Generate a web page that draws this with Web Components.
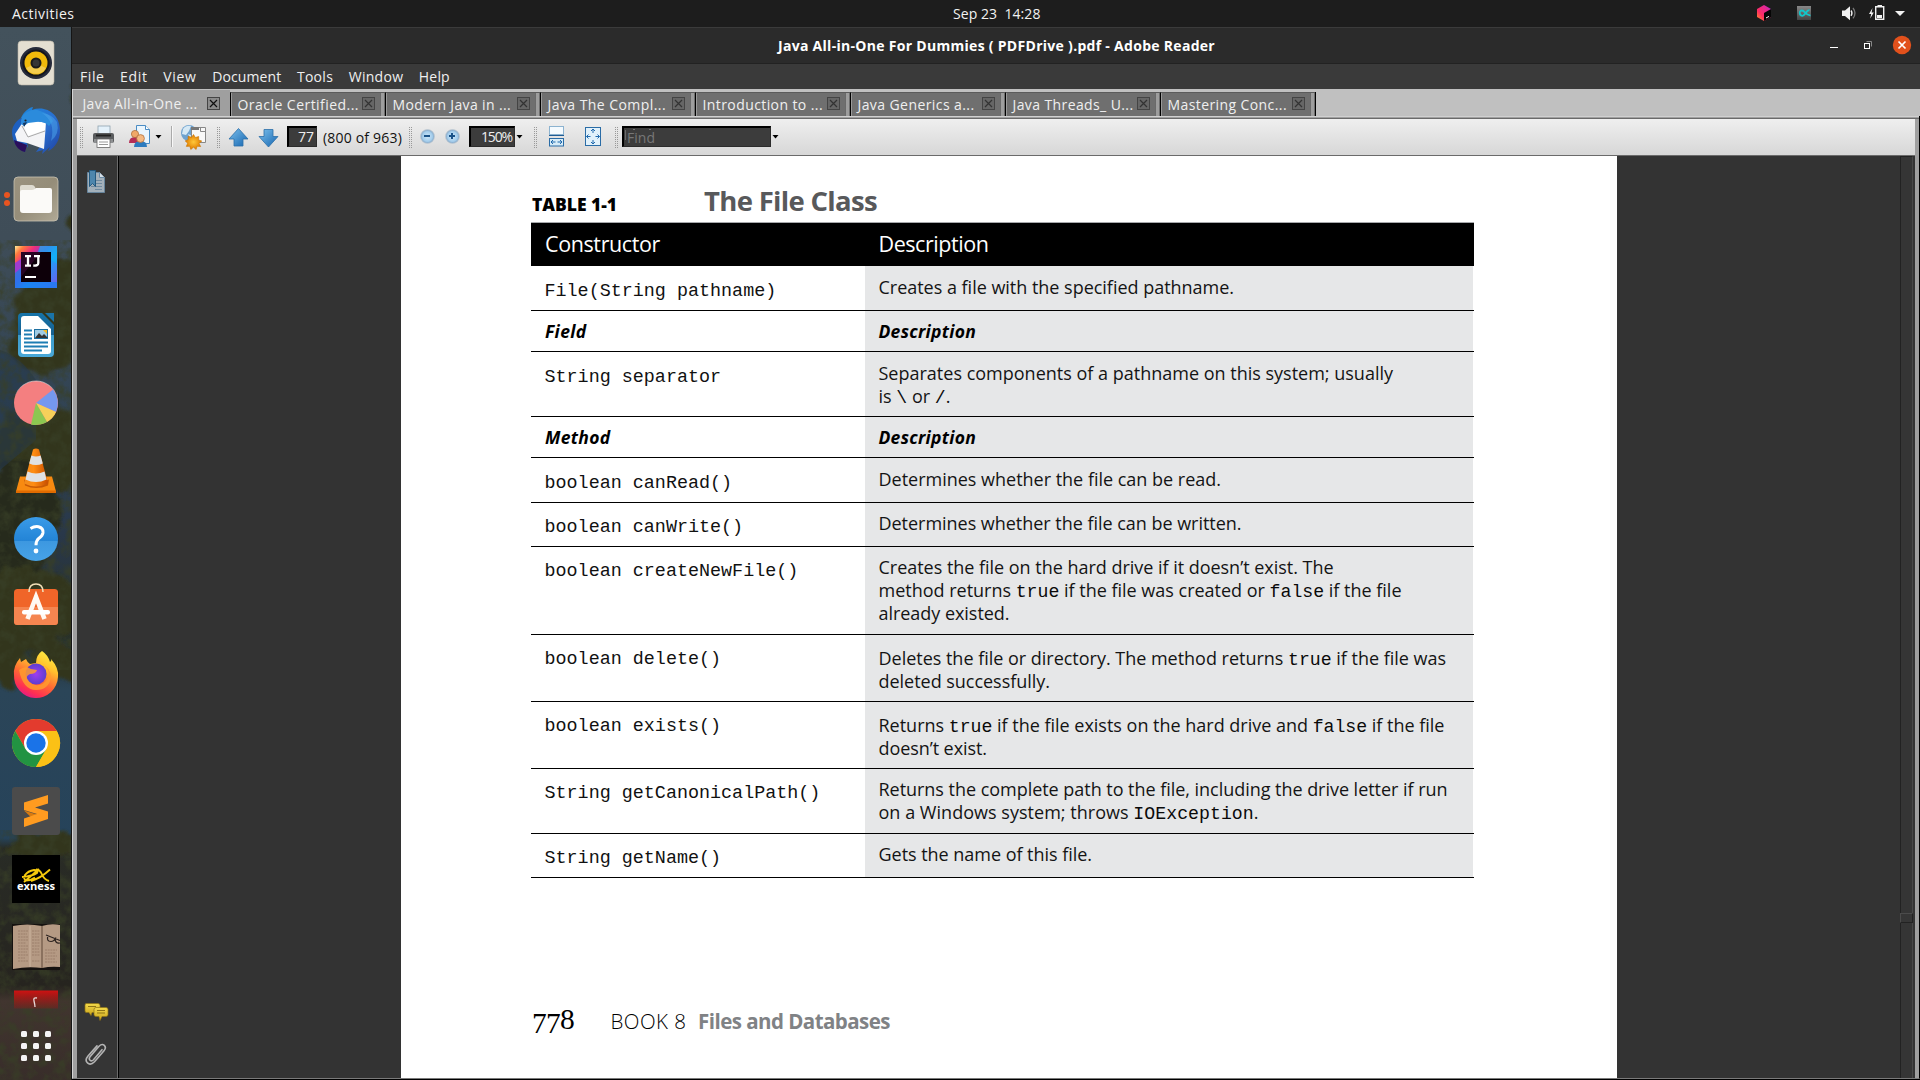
<!DOCTYPE html>
<html lang="en">
<head>
<meta charset="utf-8">
<title>Java All-in-One For Dummies ( PDFDrive ).pdf - Adobe Reader</title>
<style>
html,body{margin:0;padding:0;background:#000}
body{width:1920px;height:1080px;overflow:hidden;font-family:"Open Sans","Noto Sans",sans-serif}
</style>
</head>
<body>
<desk-top></desk-top>
<script>
const make=(name,html,setup)=>{
  const t=document.createElement('template');
  t.innerHTML=html;
  customElements.define(name,class extends HTMLElement{
    constructor(){super();this.attachShadow({mode:'open'});}
    connectedCallback(){
      if(this.ready)return;this.ready=true;
      const c=document.importNode(t.content,true);
      if(setup)setup(this,c);
      this.shadowRoot.appendChild(c);
    }
  });
};

/* One line of text, tracked so that it fills the width given by w. */
customElements.define('fit-text',class extends HTMLElement{
  constructor(){super();this.attachShadow({mode:'open'});
    this.shadowRoot.innerHTML='<style>:host{display:inline-block;white-space:pre;vertical-align:baseline}</style><slot></slot>';}
  connectedCallback(){
    const w=parseFloat(this.getAttribute('w')),n=this.textContent.length;
    this.style.letterSpacing='0px';
    const now=this.getBoundingClientRect().width;
    if(w&&n&&now)this.style.letterSpacing=((w-now)/n).toFixed(3)+'px';
    if(w)this.style.width=w+'px';
  }
});

make('top-bar',`<style>
:host{display:flex;height:27px;background:#1d1d1d;color:#f2f2f2;font-size:14px;line-height:27px;align-items:center}
.l{padding-left:12px;width:953px;box-sizing:border-box}
.d{flex:1}
svg{display:block}
.t{display:flex;align-items:center;height:27px}
</style>
<div class="l"><fit-text w="62.500">Activities</fit-text></div>
<div class="d"><fit-text w="87.500">Sep 23&nbsp; 14:28</fit-text></div>
<div class="t"><svg width="170" height="27" viewBox="1750 0 170 27">
<defs><linearGradient id="c" x1="0" y1="1" x2="1" y2="0"><stop offset="0" stop-color="#ff9a1f"/><stop offset=".35" stop-color="#ff2e63"/><stop offset=".75" stop-color="#e0269a"/><stop offset="1" stop-color="#8a3cf0"/></linearGradient>
<linearGradient id="g" x2="0" y2="1"><stop stop-color="#888"/><stop offset="1" stop-color="#444"/></linearGradient></defs>
<path d="M1757 9l7-4 7 4v8l-7 4-7-4z" fill="url(#c)"/><path d="M1764 13l7-4v8l-7 4z" fill="#050505"/><path d="M1766 18l3-1.600" stroke="#fff" stroke-width="1"/>
<rect x="1797" y="6" width="14" height="14" fill="url(#g)"/>
<path d="M1809.500 10.200c-3-.6-4.500 5.600-7 5.600-3.500 0-3.700-5.300-.5-5.300 3 0 3.500 5.300 8.500 4.800" fill="none" stroke="#12c7cb" stroke-width="1.800"/>
<path d="M1842 10.500h3l5-4.300v14l-5-4.300h-3z" fill="#f2f2f2"/><path d="M1851 10.500q2 2.700 0 5.400" fill="none" stroke="#eee" stroke-width="1.300"/><path d="M1853 8q4 5.200 0 10.400" fill="none" stroke="#777" stroke-width="1.300"/>
<path d="M1872.500 8l-3.500 6h2.200l-1 4.500 3.600-6h-2.200z" fill="#f2f2f2"/>
<path d="M1875.700 6.700h8v12.600h-8z" fill="none" stroke="#f2f2f2" stroke-width="1.400"/><rect x="1877.500" y="5" width="4.500" height="1.500" fill="#f2f2f2"/><rect x="1877" y="15" width="5" height="3" fill="#f2f2f2"/>
<path d="M1895 11h10l-5 5z" fill="#f2f2f2"/>
</svg></div>`);

make('dock-icon',`<style>:host{display:flex;height:68px;width:72px;align-items:center;justify-content:center;flex:none}svg{display:block;overflow:visible}</style>
<svg width="48" height="48" viewBox="0 0 48 48"></svg>`,(h,c)=>{c.querySelector('svg').innerHTML=ICONS[h.getAttribute('name')];});

const ICONS={
speaker:`<rect x="6" y="2" width="36" height="44" rx="3.500" fill="#e4dfd2" stroke="#b9b3a5" stroke-width=".6"/><circle cx="24" cy="24" r="16" fill="#262a3a"/><circle cx="24" cy="24" r="13.600" fill="#15161d"/><circle cx="24" cy="24" r="11.500" fill="#f0b90b"/><path d="M14 29a11.500 11.500 0 0 0 20 0q-10-6-20 0z" fill="#fff" opacity=".28"/><circle cx="24" cy="24" r="5.500" fill="#1a1a1a"/><circle cx="24" cy="24" r="3.500" fill="#353535"/>`,
mail:`<defs><linearGradient id="tb" x1="0" y1="0" x2="1" y2="1"><stop stop-color="#1c86dc"/><stop offset=".55" stop-color="#2a6fd0"/><stop offset="1" stop-color="#1f3f9e"/></linearGradient></defs>
<path d="M9 11C12 4 18 0 21 0l-1 3C34-2 48 7 48 24c0 9-5 17-12 20l2-4-8 7 1-4-7 2 6-8L14 14z" fill="url(#tb)"/>
<path d="M9 11C5 13 0 19 0 25c0 10 6 17 13 20l1-7 2 3-4-20z" fill="#1d5fc0"/><path d="M2 33c1 7 6 11 11 12l2-7z" fill="#2a0f5c"/>
<path d="M3 27l8-12 14-1 9 2-2 26-17-6-10-2z" fill="#f4f4f6"/>
<path d="M11 16q8-3 22 0v7l-17 6z" fill="#fff"/><path d="M10 19l6 11 17-6" fill="none" stroke="#a9a9a9" stroke-width="1"/>
<path d="M9 17Q8 9 15 5T28 4q9 2 13 10l-4 5q-5-5-13-4l-8 1-4 3z" fill="#2b8bdc"/><path d="M11 16l4-1-3 5z" fill="#14365f"/><circle cx="13.500" cy="13.500" r="1.100" fill="#222"/>
<path d="M30 6q14 9 9 28 9-7 6-19-5-8-15-9z" fill="#4aa3ea" opacity=".55"/>`,
files:`<defs><linearGradient id="fl" x1="0" y1="0" x2="1" y2="1"><stop stop-color="#9b9380"/><stop offset=".5" stop-color="#958d79"/><stop offset="1" stop-color="#b0a996"/></linearGradient></defs><rect x="2" y="2" width="44" height="44" rx="4" fill="url(#fl)" stroke="#c9c3b3" stroke-width=".8"/><path d="M8 14v-2q0-2 2-2h10q2 0 3 2l1 3h14v6H8z" fill="#dedbd0"/><path d="M8 17q0-2 2-2h10q2 0 4-2h14q2 0 2 2v20q0 3-3 3H11q-3 0-3-3z" fill="#fbfaf8"/>`,
idea:`<defs><linearGradient id="ij" x1="0" y1="0" x2="1" y2=".9"><stop stop-color="#fff09a"/><stop offset=".12" stop-color="#ff7a3d"/><stop offset=".27" stop-color="#f02e7c"/><stop offset=".45" stop-color="#7b3fd8"/><stop offset=".62" stop-color="#18a5f8"/><stop offset="1" stop-color="#6a5ef0"/></linearGradient></defs><rect x="3" y="3" width="42" height="42" fill="url(#ij)"/><path d="M3 45V28l6-5v16h36v6z" fill="#1b7df0" opacity=".8"/><path d="M3 20l6-4v9l-6 5z" fill="#a03bd0"/><path d="M45 3v18l-6-4V9H26l2-6z" fill="#12b2f5" opacity=".7"/><rect x="9" y="9" width="30" height="30" fill="#0d0009"/><path d="M9 9h20L9 34z" fill="#35052f" opacity=".7"/><path d="M13 13.200h6M16 13v10M13 22.700h6M22 13.200h6M26.300 13v7q0 3-5 2.500" fill="none" stroke="#fff" stroke-width="2.300"/><rect x="13" y="33" width="11" height="2" fill="#fff"/>`,
writer:`<defs><linearGradient id="wr" x2="0" y2="1"><stop stop-color="#1674a9"/><stop offset=".49" stop-color="#17608f"/><stop offset=".5" stop-color="#3c9bcb"/><stop offset="1" stop-color="#49a8d8"/></linearGradient></defs><path d="M6 6q0-4 4-4h20l12 12v28q0 4-4 4H10q-4 0-4-4z" fill="url(#wr)"/><path d="M33 2h9v9z" fill="#1a74a8"/><path d="M9 8q0-3 3-3h14l13 13v22q0 3-3 3H12q-3 0-3-3z" fill="#fff"/><path d="M12 19.500h8M12 23.500h8M12 27.500h8M12 31.500h24M12 35.500h24M12 39.500h18" stroke="#1d7db3" stroke-width="2"/><rect x="22.500" y="18.500" width="13" height="9" fill="#9fcbe4" stroke="#1d6fa0"/><path d="M23 27l4-5 3 3 2-2 4 4z" fill="#333"/><path d="M31 19h4v4z" fill="#f5b922"/>`,
pie:`<circle cx="24" cy="24" r="22" fill="#f47f80"/><path d="M24 24L41 10.500A22 22 0 0 1 44 33z" fill="#7598ee"/><path d="M24 24l20 9a22 22 0 0 1-9 10z" fill="#f6d05a"/><path d="M24 24l11 19a22 22 0 0 1-16 2.500z" fill="#8cc751"/><path d="M3 17a22 22 0 0 1 42 0A22.500 22.500 0 0 0 3 17z" fill="#fff" opacity=".5"/>`,
vlc:`<defs><linearGradient id="vl"><stop stop-color="#f08a1c"/><stop offset=".4" stop-color="#ff8d12"/><stop offset="1" stop-color="#c84e00"/></linearGradient></defs><g transform="translate(0 -1.500)"><path d="M8 31h32l4 15H4z" fill="#f88a10"/><path d="M4 45h40v2.500H4z" fill="#e06b00"/><path d="M12 34q12 6 25 0l-1 6q-12 5-23 0z" fill="#c85a04"/><path d="M21 4q3-2 6 0l9 34q-12 6-24 0z" fill="url(#vl)"/><path d="M19.400 10q4.600 2 9.200 0l2.200 8q-6.800 3-13.600 0zM15.500 26q8.500 4 17 0l2 8q-10.500 5-21 0z" fill="#dfe1e3"/></g>`,
help:`<defs><linearGradient id="hp" x2="0" y2="1"><stop stop-color="#3a9be8"/><stop offset=".54" stop-color="#2384d6"/><stop offset=".55" stop-color="#3d98e0"/><stop offset="1" stop-color="#47a3e8"/></linearGradient></defs><circle cx="24" cy="24" r="22" fill="url(#hp)"/><path d="M18.500 13.500q4-2.500 8-1.800 5 1.300 4.500 6-.5 3-4 5.500-3 2.500-3 7" fill="none" stroke="#fff" stroke-width="3"/><circle cx="24" cy="36" r="2.400" fill="#fff"/>`,
store:`<rect x="2" y="6" width="44" height="36" rx="3.500" fill="#f06529"/><path d="M2 24h44v14.500q0 3.500-3.500 3.500h-37Q2 42 2 38.500z" fill="#f58550"/><path d="M15.500 36l8.500-22 8.500 22" fill="none" stroke="#fff8f2" stroke-width="4.600"/><rect x="10" y="27" width="28" height="4.500" rx="2" fill="#fff"/><path d="M17 9q0-8 7-8t7 8" fill="none" stroke="#f2dfb8" stroke-width="1.600"/>`,
firefox:`<defs><linearGradient id="ff" x1=".8" y1="0" x2=".3" y2="1"><stop stop-color="#fff044"/><stop offset=".3" stop-color="#ffc22e"/><stop offset=".6" stop-color="#ff6b33"/><stop offset=".85" stop-color="#ff2f52"/><stop offset="1" stop-color="#e01a8a"/></linearGradient><radialGradient id="fp"><stop stop-color="#a03cf0"/><stop offset="1" stop-color="#5c3ed0"/></radialGradient></defs><g transform="translate(0 -1)"><path d="M30 1q6 4 8 11 2-1 1-3 8 9 7 18A22 22 0 0 1 2 25q-1-9 6-17l1 4 5-3q1 3 4 5l6-1q0-8 6-12z" fill="url(#ff)"/><circle cx="24" cy="24" r="10.500" fill="url(#fp)"/><path d="M7 20q6-5 12-1l6 1q-1 4-7 4-5 2-2 6 4 6 11 5 9-2 10-12-2-7-7-8 8 2 9 12-2 13-15 13T7 20z" fill="#ff9b2e" opacity=".85"/></g>`,
chrome:`<circle cx="24" cy="24" r="24" fill="#fbc116"/><path d="M3.200 12A24 24 0 0 1 44.800 12H24L13.600 30z" fill="#e33b2e"/><path d="M3.200 12A24 24 0 0 0 24 48l10.400-18H13.600z" fill="#229342"/><path d="M44.800 12H24l10.400 18L24 48A24 24 0 0 0 44.800 12z" fill="#fbc116"/><circle cx="24" cy="24" r="12" fill="#fff"/><circle cx="24" cy="24" r="9.700" fill="#1a73e8"/>`,
sublime:`<rect width="48" height="48" rx="3" fill="#4b4b4b"/><path d="M12 23.500l24 7.500-12 4z" fill="#d87a10"/><path d="M12 15.500l24-7.500v8.500L23 20.500l13 4V32l-24 8v-8.500l13-4.500-13-4z" fill="#ff9b20"/>`,
exness:`<rect width="48" height="48" fill="#000"/><path d="M10 22q11-1 15-4 2-3-3-3-6 1-9 5-2 4 1 5.500 5 0 9-3M12 27L27 14M24 14.500q4 0 6 5t7 6.500M19 26q10-3 19-11.500" fill="none" stroke="#f6c90c" stroke-width="1.900"/><text x="5" y="34.500" font-family="Open Sans" font-weight="700" font-size="10" fill="#fff" textLength="38" lengthAdjust="spacingAndGlyphs">exness</text>`,
book:`<rect width="48" height="46" y="1" fill="#15110f"/><path d="M1 3q14-3 29 0 9-3 18-1v42q-9-1-18 1-14-2-29 1z" fill="#b59a84"/><path d="M30 3v42" stroke="#7d6352" stroke-width="1.500"/><path d="M18 3v41" stroke="#cdb5a0" stroke-width="1"/><path d="M6 8h10M6 11h9M6 14h10M6 17h10M6 20h8M6 23h10M6 26h10M6 29h9M6 32h10M6 35h7M6 38h10M20 8h8M20 11h8M20 14h7M20 17h8M20 20h8M20 23h8M20 26h7M20 29h8M20 32h8M20 38h8M33 27h12M33 30h11M33 33h12M33 36h10M33 39h12" stroke="#9c7f6a" stroke-width="1.200" stroke-dasharray="2 .7"/><path d="M34 12l14 5.500M36 12.500q-2 6 3 6 3 0 5-4M43 15q0 6 5 5" fill="none" stroke="#2c2320" stroke-width="1.200"/>`,
red:`<defs><linearGradient id="rd" x2="0" y2="1"><stop stop-color="#cf1212"/><stop offset="1" stop-color="#b01010" stop-opacity=".25"/></linearGradient></defs><rect x="2" y="-.5" width="44" height="18" fill="url(#rd)"/><path d="M25 7q-4-1-3 3t1 6" fill="none" stroke="#e8d8d8" stroke-width="1.300"/>`,
grid:[9,21,33].map(y=>[9,21,33].map(x=>`<rect x="${x}" y="${y}" width="6" height="6" rx="1.500" fill="#f4f4f4"/>`).join('')).join('')
};

make('app-dock',`<style>
:host{display:grid;width:72px;height:1053px;overflow:hidden;background:#39434a}
.bg,.col{grid-area:1/1}
.bg{display:block;width:72px;height:1053px}
.col{display:flex;flex-direction:column;padding-top:2px;z-index:1;box-shadow:inset -1px 0 #151515}
.red{height:31px;display:block;overflow:hidden}
.red dock-icon{height:68px}
.item{display:grid}
.item>*{grid-area:1/1}
.dots{width:12px;height:68px;display:flex;flex-direction:column;gap:2.600px;justify-content:center;align-items:center;padding-left:1px}
.dots i{width:6px;height:6px;border-radius:3px;background:#e95420}
</style>
<svg class="bg" viewBox="0 27 72 1053"><defs>
<linearGradient id="b" x2="0" y2="1"><stop offset="0" stop-color="#43525c"/><stop offset=".2" stop-color="#3f4d58"/><stop offset=".4" stop-color="#2e4152"/><stop offset=".48" stop-color="#29384a"/><stop offset=".58" stop-color="#27302c"/><stop offset=".63" stop-color="#2b4558"/><stop offset=".77" stop-color="#26435a"/><stop offset=".78" stop-color="#292c26"/><stop offset=".91" stop-color="#26241f"/><stop offset=".925" stop-color="#41352f"/><stop offset="1" stop-color="#382d2a"/></linearGradient>
<filter id="n" x="0" y="0" width="1" height="1"><feTurbulence type="fractalNoise" baseFrequency=".09" numOctaves="4" seed="4"/><feColorMatrix values="0 0 0 0 .04  0 0 0 0 .05  0 0 0 0 .02  2.600 0 0 0 -1"/></filter>
<filter id="e" x="-.3" y="-.3" width="1.600" height="1.600"><feTurbulence type="fractalNoise" baseFrequency=".06" numOctaves="3"/><feDisplacementMap in="SourceGraphic" scale="24"/><feGaussianBlur stdDeviation="1.500"/></filter></defs>
<rect y="27" width="72" height="1053" fill="url(#b)"/>
<g filter="url(#e)" fill="#33361f"><ellipse cx="80" cy="105" rx="8" ry="14"/><ellipse cx="82" cy="220" rx="14" ry="16"/><ellipse cx="60" cy="310" rx="45" ry="52"/><ellipse cx="45" cy="345" rx="34" ry="30"/><ellipse cx="50" cy="450" rx="58" ry="42"/><ellipse cx="16" cy="520" rx="45" ry="60" fill="#262c1b"/><ellipse cx="20" cy="610" rx="65" ry="42"/><ellipse cx="5" cy="660" rx="22" ry="22"/><ellipse cx="60" cy="660" rx="30" ry="16"/><ellipse cx="50" cy="845" rx="50" ry="14"/></g>
<path d="M0 350q20 6 36 30v60L0 470z" fill="#24384c" opacity=".6"/>
<rect y="240" width="72" height="430" filter="url(#n)" opacity=".75"/><rect y="830" width="72" height="250" filter="url(#n)" opacity=".75"/></svg>
<div class="col">
<dock-icon name="speaker"></dock-icon><dock-icon name="mail"></dock-icon>
<div class="item"><dock-icon name="files"></dock-icon><div class="dots"><i></i><i></i></div></div>
<dock-icon name="idea"></dock-icon><dock-icon name="writer"></dock-icon><dock-icon name="pie"></dock-icon><dock-icon name="vlc"></dock-icon><dock-icon name="help"></dock-icon><dock-icon name="store"></dock-icon><dock-icon name="firefox"></dock-icon><dock-icon name="chrome"></dock-icon><dock-icon name="sublime"></dock-icon><dock-icon name="exness"></dock-icon><dock-icon name="book"></dock-icon>
<div class="red"><dock-icon name="red"></dock-icon></div><dock-icon name="grid"></dock-icon>
</div>`);

make('title-bar',`<style>
:host{display:flex;height:37px;box-sizing:border-box;border-top:1px solid #3b3b3b;border-bottom:1px solid #222;background:#2b2b2b;color:#fff;font-weight:700;font-size:14px;line-height:36px}
.t{flex:1;padding-left:706px}
svg{display:block}
</style><div class="t"><fit-text w="437">Java All-in-One For Dummies ( PDFDrive ).pdf - Adobe Reader</fit-text></div>
<svg width="100" height="35" viewBox="1820 28 100 35"><path d="M1830 47.500h8" stroke="#fff"/><path d="M1866.500 41.500h5v5" fill="none" stroke="#888"/><rect x="1864.500" y="43.500" width="5" height="5" fill="none" stroke="#fff"/><circle cx="1902" cy="45" r="9.200" fill="#e2511c"/><path d="M1898.500 41.500l7 7m0-7l-7 7" stroke="#fff" stroke-width="1.700"/></svg>`);

make('menu-bar',`<style>
:host{display:flex;height:25px;background:#3a3a3a;color:#f0f0f0;font-size:14px;line-height:25px;padding-left:8px}
fit-text{margin-right:15.600px}
</style><fit-text w="24.500">File</fit-text><fit-text w="27.500">Edit</fit-text><fit-text w="33.500">View</fit-text><fit-text w="69">Document</fit-text><fit-text w="36.300">Tools</fit-text><fit-text w="54.500">Window</fit-text><fit-text w="31">Help</fit-text>`);

make('app-tab',`<style>
:host{display:flex;box-sizing:border-box;width:155px;height:24px;margin-top:3px;background:#6f6f6f;color:#efefef;font-size:14px;line-height:24px;border-left:1px solid #000;border-top:1px solid #5b5b5b;box-shadow:inset 1px 0 #9a9a9a;padding-left:6.500px}
:host([active]){width:157px;height:27px;margin-top:1px;background:#9f9f9f;border:0;box-shadow:none;padding-left:9.500px;line-height:27px}
.t{width:124.500px}
.x{width:13px;height:13px;margin-top:4px;display:block}
.e{width:4px;height:23px;margin-left:5px;background:#9d9d9d;border-left:1px solid #6a6a6a;box-sizing:border-box}
:host([active]) .x{margin-top:7px}:host([active]) .e{display:none}
</style><div class="t"><slot></slot></div><svg class="x" viewBox="0 0 13 13"><rect x=".5" y=".5" width="12" height="12" fill="#666" stroke="#444"/><path d="M3 3l7 7m0-7l-7 7" stroke="#333" stroke-width="1.200"/></svg><div class="e"></div>`,(h,c)=>{
 if(h.hasAttribute('active')){c.querySelector('rect').setAttribute('fill','#8b8b8b');c.querySelector('rect').setAttribute('stroke','#444');c.querySelector('path').setAttribute('stroke','#111');}});

make('tab-strip',`<style>
:host{display:flex;height:27px;background:#c0c0c0;border-left:1px solid #d4d4d4}
.end{width:1px;height:24px;margin-top:3px;background:#000}
</style><app-tab active><fit-text w="115">Java All-in-One ...</fit-text></app-tab><app-tab><fit-text w="121.500">Oracle Certified...</fit-text></app-tab><app-tab><fit-text w="118.500">Modern Java in ...</fit-text></app-tab><app-tab><fit-text w="118.500">Java The Compl...</fit-text></app-tab><app-tab><fit-text w="120.500">Introduction to ...</fit-text></app-tab><app-tab><fit-text w="117">Java Generics a...</fit-text></app-tab><app-tab><fit-text w="121">Java Threads_ U...</fit-text></app-tab><app-tab><fit-text w="119.500">Mastering Conc...</fit-text></app-tab><div class="end"></div>`);

make('num-field',`<style>:host{display:block;box-sizing:border-box;height:21px;margin-top:7px;background:#3c3c3c;border:1px solid #2c2c2c;border-top:2px solid #000;border-left:2px solid #000;color:#eee;font-size:14px;line-height:18px;overflow:hidden;white-space:nowrap}</style><slot></slot>`);

make('tool-bar',`<style>
:host{display:flex;height:36px;box-sizing:content-box;background:linear-gradient(#efefef,#d7d7d7);border-bottom:1px solid #6a6a6a;align-items:flex-start;overflow:hidden}
svg{display:block;flex:none}
.a{font-size:14px;line-height:37px;color:#111;height:36px}
</style>
<svg width="210" height="37" viewBox="77 119 210 37"><defs><linearGradient id="a" x1="0" y1="0" x2="1" y2="1"><stop stop-color="#7cc0ec"/><stop offset="1" stop-color="#1565b0"/></linearGradient><radialGradient id="o"><stop stop-color="#ffc83a"/><stop offset="1" stop-color="#e07c00"/></radialGradient></defs>
<path d="M80.500 127v21M82.500 127v21M217.500 127v21M219.500 127v21" stroke="#999" stroke-dasharray="1 1"/>
<rect x="98" y="126" width="12" height="9" fill="#e4f1fa" stroke="#8fa3b0" stroke-width=".8"/><rect x="93" y="133" width="21" height="10" rx="2" fill="#5a5c5e"/><rect x="94" y="139" width="19" height="4" fill="#8e9092"/><path d="M96 135.500h15" stroke="#222" stroke-width="2"/><rect x="97" y="139" width="13" height="8.500" fill="#fff" stroke="#666" stroke-width=".8"/><path d="M99 142h9M99 144.500h9" stroke="#999"/>
<path d="M136.500 125.500h9l4 4v14h-13z" fill="#eaf5fd" stroke="#4a8cc4"/><path d="M145.500 125.500v4h4" fill="#fff" stroke="#4a8cc4"/><path d="M129 143q0-6 6-6t6 6z" fill="#b52d55"/><circle cx="135" cy="134" r="3.600" fill="#f0a868" stroke="#a86534" stroke-width=".7"/><path d="M134 147q0-6 6.500-6t6.500 6z" fill="#2c7bbf"/><circle cx="140.500" cy="138.500" r="3.900" fill="#f6b981" stroke="#a86534" stroke-width=".7"/><path d="M155.500 135h6l-3 3.500z" fill="#000"/><path d="M171.500 126v21" stroke="#aaa"/><path d="M172.500 126v21" stroke="#f8f8f8"/>
<circle cx="189" cy="133" r="8" fill="#6ea2cf"/><path d="M183 129q3-4 8-3l-2 5-3 4-4-1zM188 134l5 2-2 4z" fill="#d6e9f5"/><path d="M191.500 127.500h14v15h-14z" fill="#f8f8f8" stroke="#888"/><path d="M200.500 127.500v4h5" fill="none" stroke="#888"/><rect x="191" y="127" width="8" height="3" fill="#777"/><path d="M193.500 134.500l1.900 3 3.300-1-.1 3.400 3.200 1.200-2.800 2.300 1.700 3.200-3.600-.4-1 3.300-2.600-2.300-2.700 2.300-1-3.300-3.500.2 1.400-3.200-2.500-2.300 3-1.300-.1-3.300 3.400 1z" fill="url(#o)" stroke="#c87400" stroke-width=".6"/>
<path d="M238.500 128.500l9.500 10.500h-5v7h-9v-7h-5z" fill="url(#a)" stroke="#2c6ea8" stroke-width=".8"/><path d="M268.500 147l9.500-10.500h-5v-7h-9v7h-5z" fill="url(#a)" stroke="#2c6ea8" stroke-width=".8"/></svg>
<num-field style="width:30px"><fit-text w="16" style="margin-left:9px">77</fit-text></num-field>
<div class="a" style="margin-left:6px"><fit-text w="79">(800 of 963)</fit-text></div>
<svg width="67" height="37" viewBox="402 119 67 37"><path d="M409.500 127v21M411.500 127v21" stroke="#999" stroke-dasharray="1 1"/><defs><radialGradient id="z"><stop stop-color="#cfe7f8"/><stop offset=".7" stop-color="#a4cdec"/><stop offset="1" stop-color="#7d9fc0"/></radialGradient></defs><circle cx="427.500" cy="136.500" r="7" fill="url(#z)" stroke="#c4cdd4" stroke-width=".8"/><circle cx="452.500" cy="136.500" r="7" fill="url(#z)" stroke="#c4cdd4" stroke-width=".8"/><path d="M424 136h6M449 136h6M452 133v6" stroke="#1a5288" stroke-width="2"/></svg>
<num-field style="width:46px"><fit-text w="31" style="margin-left:10px">150%</fit-text></num-field>
<svg width="107" height="37" viewBox="515 119 107 37"><path d="M516.500 135h6l-3 3.500z" fill="#000"/><path d="M534.500 127v21M536.500 127v21M615.500 127v21M617.500 127v21" stroke="#999" stroke-dasharray="1 1"/><rect x="549.500" y="126.500" width="14" height="8" fill="#f4fafe" stroke="#8cb3d0"/><path d="M549 135.500h15" stroke="#1f5c94"/><rect x="549.500" y="138.500" width="14" height="7.500" fill="#d7ecf8" stroke="#2a6ca6"/><path d="M551 142h4.500M562 142h-4.500M553 140l-2 2 2 2M560 140l2 2-2 2" stroke="#1f69ad" fill="none"/><rect x="585.500" y="127.500" width="15" height="18" fill="#e1f1fb" stroke="#2a6ca6"/><path d="M593 129v4M593 144v-4M586.500 136.500h4M599.500 136.500h-4M591 131l2-2 2 2M591 142l2 2 2-2M588.500 134.500l-2 2 2 2M597.500 134.500l2 2-2 2" stroke="#1f69ad" fill="none"/></svg>
<num-field style="width:149px;color:#777;background:linear-gradient(#6a6a6a,#6a6a6a) 1px 2px/1px 10px no-repeat,linear-gradient(#777,#777) 9px 1px/2px 1px no-repeat,linear-gradient(#777,#777) 25px 1px/2px 1px no-repeat,#3c3c3c"><fit-text w="28" style="margin-left:3px;line-height:19px">Find</fit-text></num-field>
<svg width="12" height="37" viewBox="771 119 12 37"><path d="M772.500 135h6l-3 3.500z" fill="#000"/></svg>`);

make('side-bar',`<style>:host{display:flex;flex-direction:column;justify-content:space-between;width:42px;box-sizing:border-box;background:#353535;border-right:1px solid #000;box-shadow:inset -1px 0 #6b6b6b}svg{display:block}</style>
<svg width="40" height="50" viewBox="77 156 40 50"><path d="M87.500 172.500h12l5 5v15h-17z" fill="#a3b0ba" stroke="#66849c"/><path d="M99.500 172.500v5h5" fill="#d5dee5" stroke="#6b8ba5"/><path d="M96 180.500h6M96 183.500h6M91 186.500h11M95 189.500h7" stroke="#6f8aa0"/><path d="M89.500 170.500h6v16l-3-3-3 3z" fill="#4d86ad" stroke="#23587e"/></svg>
<svg width="40" height="88" viewBox="77 990 40 88"><defs><linearGradient id="y" x2="0" y2="1"><stop stop-color="#f3d94a"/><stop offset="1" stop-color="#c9a31c"/></linearGradient></defs><path d="M86 1003.500h12q2 0 2 2v5q0 2-2 2h-6l-1 3-2-3h-3q-1 0-1-2v-5q0-2 1-2z" fill="url(#y)" stroke="#8f7415" stroke-width=".7"/><path d="M96 1007.500h10q2 0 2 2v5q0 2-2 2h-4l-2 4-1-4h-3q-2 0-2-2v-5q0-2 2-2z" fill="url(#y)" stroke="#8f7415" stroke-width=".7"/><path d="M97 1010.500h8M97 1013h8M88 1006.500h8" stroke="#8f7415"/>
<path transform="translate(0 -1.300)" d="M102 1051l-8.500 10q-2 2-3.500.5t0-3.500l9-10.500q3-3 5.300-.8t-.3 5.300l-9.500 11q-4 4-7 1.200t.5-7l9-10" fill="none" stroke="#b4b4b4" stroke-width="1.600" stroke-linecap="round"/></svg>`);

/* Table row: h is the row height, l and r the top padding of each cell. */
make('doc-row',`<style>
:host{display:grid;grid-template-columns:334px 608px;box-sizing:border-box;border-bottom:1px solid #000;line-height:23px;color:#141414;font-size:18px}
.l{padding-left:13.500px;font-family:"Liberation Mono",monospace;font-size:18.400px;color:#111}
.r{padding-left:13.500px;background:#e6e7e8}
:host([head]) .l,:host([head]) .r{font:italic 700 17.500px/23px "Open Sans",sans-serif;color:#000}
:host([head]) .l{padding-left:14px}
</style><div class="l"><slot name="l"></slot></div><div class="r"><slot></slot></div>`,(h,c)=>{
 h.style.height=h.getAttribute('h')+'px';
 c.querySelector('.l').style.paddingTop=h.getAttribute('l')+'px';
 c.querySelector('.r').style.paddingTop=h.getAttribute('r')+'px';});

const rows=[
[45,14,10,['File(String pathname)'],[['Creates a file with the specified pathname.',355.5]]],
[41,9,9,['Field',41.5],[['Description',97.5]],1],
[65,14,10,['String separator'],[['Separates components of a pathname on this system; usually',514.5],['is <code>\\</code> or <code>/</code>.',72]]],
[41,9,9,['Method',65.5],[['Description',97.5]],1],
[45,14,10,['boolean canRead()'],[['Determines whether the file can be read.',342.5]]],
[44,13,9,['boolean canWrite()'],[['Determines whether the file can be written.',363]]],
[88,13,9,['boolean createNewFile()'],[['Creates the file on the hard drive if it doesn’t exist. The',455],['method returns <code>true</code> if the file was created or <code>false</code> if the file',523],['already existed.',131]]],
[67,13,12,['boolean delete()'],[['Deletes the file or directory. The method returns <code>true</code> if the file was',567.5],['deleted successfully.',171.500]]],
[67,13,12,['boolean exists()'],[['Returns <code>true</code> if the file exists on the hard drive and <code>false</code> if the file',566],['doesn’t exist.',108.5]]],
[65,13,9,['String getCanonicalPath()'],[['Returns the complete path to the file, including the drive letter if run',569],['on a Windows system; throws <code>IOException</code>.',380]]],
[44,13,9,['String getName()'],[['Gets the name of this file.',213.5]]]
].map(([h,l,r,a,b,hd])=>`<doc-row ${hd?'head':''} h="${h}" l="${l}" r="${r}"><fit-text slot="l" ${a[1]?`w="${a[1]}"`:''}>${a[0]}</fit-text>${b.map(x=>`<div class="line"><fit-text w="${x[1]}">${x[0]}</fit-text></div>`).join('')}</doc-row>`).join('');

make('pdf-page',`<style>
:host{display:flex;flex-direction:column;width:1216px;box-sizing:border-box;background:#fff;padding:25px 0 0 130px;color:#000}
.cap{display:flex;align-items:baseline;height:41px;line-height:40px}
.cap b{font-weight:800;font-size:17.500px;width:173px;padding-left:1px;box-sizing:border-box}
.cap h1{margin:0;font-weight:700;font-size:27.500px;color:#58595b}
.hd{display:grid;grid-template-columns:334px 608px;width:943px;height:44px;box-sizing:border-box;background:#000;border-top:1px solid #a7a9ac;color:#fff;font-size:21.500px;line-height:41px}
.hd>div{padding-left:14px}
.hd>div+div{padding-left:13.500px}
.rows{width:943px}
.line{height:23px}
code{font-family:"Liberation Mono",monospace;font-size:18.200px;line-height:0;color:#0a0a0a}
footer{display:flex;align-items:baseline;margin-top:121px;padding-left:1px;line-height:40px;font-size:20.500px}
.n{font-family:"Liberation Serif",serif;font-size:29.500px;width:78.500px;line-height:40px}
.n span{vertical-align:-4px;line-height:0}
.k{font-weight:300;width:87.500px}
.f{font-weight:700;color:#808285}
</style>
<div class="cap"><b><fit-text w="85">TABLE 1-1</fit-text></b><h1><fit-text w="173">The File Class</fit-text></h1></div>
<div class="hd"><div><fit-text w="115">Constructor</fit-text></div><div><fit-text w="110">Description</fit-text></div></div>
<div class="rows">${rows}</div>
<footer><div class="n"><fit-text w="42"><span>77</span>8</fit-text></div><div class="k"><fit-text w="76">BOOK 8</fit-text></div><div class="f"><fit-text w="192">Files and Databases</fit-text></div></footer>`);

make('scroll-track',`<style>:host{display:flex;flex-direction:column;width:13px;margin-right:2px;box-sizing:border-box;background:#353535;border-left:1px solid #222;border-right:1px solid #484848;border-top:1px solid #222;padding-top:756px}
i{display:block;width:13px;height:10px;margin-left:-1px;box-sizing:border-box;background:#363636;border:1px solid #4b4b4b;border-right-color:#222;border-bottom-color:#222}</style><i></i>`);

make('reader-window',`<style>
:host{display:flex;flex-direction:column;width:1848px;height:1053px;overflow:hidden}
.frame{display:flex;flex-direction:column;height:963px;flex:none;box-sizing:border-box;border-left:1px solid #d4d4d4;border-right:1px solid #000;border-bottom:1px solid #7a7a7a;background:#9f9f9f}
.edge{height:3px;flex:none;background:linear-gradient(#d0d0d0 1px,#9f9f9f 1px 2px,#6a6a6a 2px)}
.in{display:flex;flex-direction:column;margin:0 4px 0 4px;width:1838px;flex:1;min-height:0}
.view{display:flex;flex:1;min-height:0;background:#333}
.gap{width:282px}.sp{flex:1}
.bot{height:1px;background:#000}
</style>
<title-bar></title-bar><menu-bar></menu-bar><tab-strip></tab-strip>
<div class="frame"><div class="edge"></div><div class="in"><tool-bar></tool-bar><div class="view"><side-bar></side-bar><div class="gap"></div><pdf-page></pdf-page><div class="sp"></div><scroll-track></scroll-track></div></div></div><div class="bot"></div>`);

make('desk-top',`<style>:host{display:flex;flex-direction:column;width:1920px;height:1080px;overflow:hidden}.m{display:flex}</style><top-bar></top-bar><div class="m"><app-dock></app-dock><reader-window></reader-window></div>`);
</script>
</body>
</html>
